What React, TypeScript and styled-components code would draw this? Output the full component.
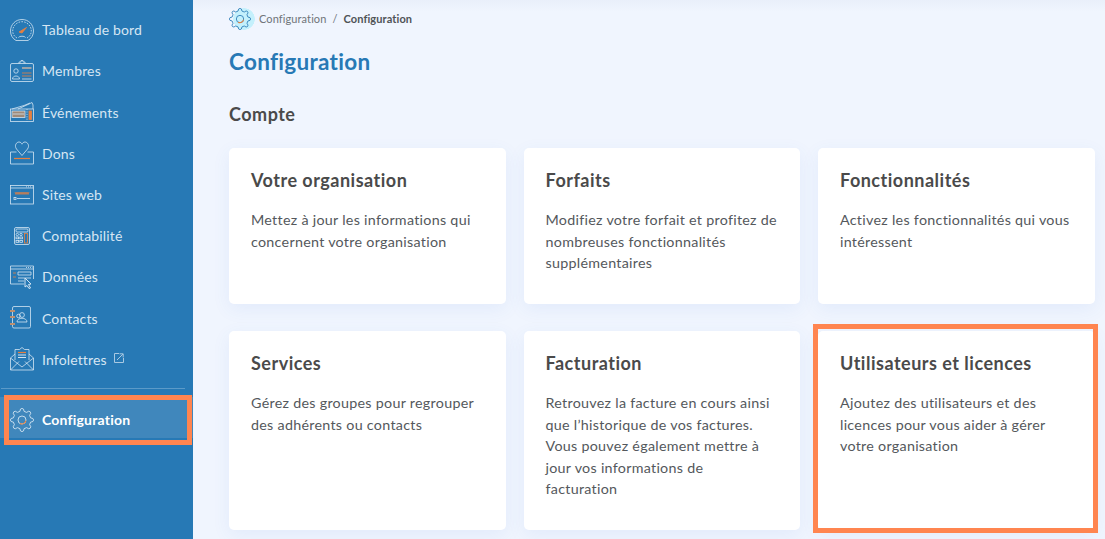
import React from 'react'
import styled, { createGlobalStyle } from 'styled-components'

const Global = createGlobalStyle`
  html, body { margin: 0; padding: 0; height: 539px; overflow: hidden; background: #f0f5fe; }
  * { box-sizing: border-box; }
  body { font-family: "Lato", "Open Sans", sans-serif; font-variant-ligatures: none; }
`

const line = '#d3e4f2'
const accent = '#e8803f'

const IconSvg = ({ children }: { children: React.ReactNode }) => (
  <svg width="24" height="24" viewBox="0 0 24 24" fill="none" stroke={line} strokeWidth="0.8">
    {children}
  </svg>
)

const GaugeIcon = () => (
  <IconSvg>
    <path d="M6 22.5 C2.5 20.5 .5 17 .5 13 C.5 6.5 5.5 1.5 12 1.5 C18.5 1.5 23.5 6.5 23.5 13 C23.5 17 21.5 20.5 18 22.5 Z" />
    <path d="M7 20 C4.3 18.5 2.7 16 2.7 13 C2.7 7.9 6.9 3.7 12 3.7 C17.1 3.7 21.3 7.9 21.3 13 C21.3 16 19.7 18.5 17 20" strokeDasharray="1.6 1.2" />
    <path d="M8.5 19.5 C9 17.8 15 17.8 15.5 19.5" />
    <path d="M9 14 L16.5 9.5 L12 15 Z" fill={accent} stroke={accent} />
  </IconSvg>
)

const BadgeIcon = () => (
  <IconSvg>
    <rect x="0.5" y="4.5" width="23" height="18" rx="1.5" />
    <path d="M9 4.5 V3 H11 V1.5 H13 V3 H15 V4.5" />
    <circle cx="6" cy="12" r="2.2" />
    <path d="M2.5 20 C2.5 16 9.5 16 9.5 20 Z" />
    <path d="M12 9 H21.5" stroke="#a9a8a8" strokeWidth="1.8" />
    <path d="M12 14 H21.5 M12 17 H21.5" stroke={accent} />
    <path d="M12 20 H21.5" />
  </IconSvg>
)

const TicketIcon = () => (
  <IconSvg>
    <path d="M2 9 L14 5.5 L20 3" />
    <path d="M8 9 L19 4 L22 2.5 L23 5 V9" />
    <rect x="0.5" y="9" width="23" height="12.5" />
    <rect x="2" y="11" width="13" height="6.5" fill="#a08a78" stroke={line} />
    <path d="M3 14 H14" stroke={line} />
    <rect x="19" y="11" width="2.5" height="8.5" fill={accent} stroke={accent} />
    <path d="M17 9 V21.5" strokeDasharray="1.2 1.2" />
  </IconSvg>
)

const HeartIcon = () => (
  <IconSvg>
    <path d="M12 14.5 L6.5 8 C4 4.5 6.5 1 9 1 C10.5 1 11.5 2 12 3.2 C12.5 2 13.5 1 15 1 C17.5 1 20 4.5 17.5 8 Z" />
    <path d="M6.5 11 H.5 V23 H23.5 V11 H17.5" />
    <path d="M4 17.5 H20" stroke={accent} strokeWidth="1.2" />
  </IconSvg>
)

const BrowserIcon = () => (
  <IconSvg>
    <rect x="0.5" y="2.5" width="23" height="18.5" />
    <path d="M.5 5 H23.5" />
    <path d="M16 3.8 H22.5" strokeDasharray="1 1" />
    <path d="M5 9 L6 11.5 L7 9 L8 11.5 L9 9 L10 11.5 L11 9 L12 11.5 L13 9 L14 11.5 L15 9 L16 11.5 L17 9 L18 11.5 L19 9" stroke={accent} />
    <path d="M7 15.5 H20" />
    <rect x="4" y="14.5" width="2" height="2" />
  </IconSvg>
)

const CalculatorIcon = () => (
  <IconSvg>
    <rect x="4.5" y="3.5" width="15" height="17" rx="1.5" />
    <rect x="6" y="5" width="12" height="3" rx="1" />
    <circle cx="7.3" cy="10.5" r="1.2" />
    <circle cx="11" cy="10.5" r="1.2" />
    <rect x="6" y="13" width="2.6" height="1.8" />
    <rect x="6" y="16.5" width="2.6" height="1.8" />
    <rect x="9.8" y="13" width="2.6" height="1.8" />
    <rect x="9.8" y="16.5" width="2.6" height="1.8" />
    <rect x="14.5" y="9.5" width="3" height="9.5" stroke={accent} />
  </IconSvg>
)

const DataIcon = () => (
  <IconSvg>
    <path d="M14 19 H.5 V1 H23.5 V14" />
    <path d="M.5 4 H23.5" />
    <path d="M16 2.5 H22.5" strokeDasharray="1 1" />
    <path d="M3 8 H6 M3 12 H6" stroke={accent} />
    <path d="M8 7 H21 V10 H8 Z M8 13 H21 M8 16 H14" />
    <path d="M15 13 L21 19 L18.5 19.5 L20.5 23 L19 23.5 L17 20.5 L15 22 Z" strokeWidth="1" />
  </IconSvg>
)

const ContactsIcon = () => (
  <IconSvg>
    <rect x="2.5" y="0.5" width="18" height="21.5" rx="1.5" />
    <circle cx="12" cy="9" r="2.4" />
    <circle cx="8.5" cy="10" r="1.8" />
    <path d="M7 16 C7 11 17 11 17 16 Z" />
    <path d="M0 5 H5 M0 11 H5 M0 18 H5" stroke="#bc8f70" strokeWidth="2" />
  </IconSvg>
)

const MailIcon = () => (
  <IconSvg>
    <path d="M.5 11 L12 20 L23.5 11 V23 H.5 Z" />
    <path d="M.5 23 L9 14.5 M23.5 23 L15 14.5" />
    <path d="M.5 11 L5 7 M23.5 11 L19 7" />
    <path d="M5 13 V2.5 H9.5 L12 .5 L14.5 2.5 H19 V13" />
    <path d="M8 5.5 H16" stroke={accent} strokeWidth="1.2" />
    <path d="M8 8 H16 M8 10.5 H16" strokeWidth="1.2" />
  </IconSvg>
)

// eight rounded teeth round the centre of a 24 box
const gearPath = (() => {
  const pts: string[] = []
  for (let i = 0; i < 8; i++) {
    const a = (i * Math.PI) / 4 - Math.PI / 2
    const at = (r: number, d: number) =>
      `${(12 + r * Math.cos(a + d)).toFixed(2)} ${(12 + r * Math.sin(a + d)).toFixed(2)}`
    pts.push(`${i === 0 ? 'M' : 'L'}${at(8.9, -0.24)} Q${at(11.9, -0.16)} ${at(11.6, 0)} Q${at(11.9, 0.16)} ${at(8.9, 0.24)}`)
  }
  return pts.join(' ') + ' Z'
})()

const GearIcon = ({ color = line, ring = line, size = 24 }: { color?: string; ring?: string; size?: number }) => (
  <svg width={size} height={size} viewBox="0 0 24 24" fill="none" stroke={color} strokeWidth="0.9" strokeLinejoin="round">
    <path d={gearPath} />
    <circle cx="12" cy="12" r="4" stroke={ring} />
    <path d="M15.9 12.7 A4 4 0 0 1 10 15.5" stroke={accent} strokeWidth="1.1" />
  </svg>
)

const ExternalIcon = () => (
  <svg width="10" height="10" viewBox="0 0 10 10" fill="none" stroke="#a9c9e2" strokeWidth="1">
    <path d="M5 .5 H.5 V9.5 H9.5 V5" />
    <path d="M3 7 L9 1 M5.5 .8 H9.2 V4.5" />
  </svg>
)

const Page = styled.div`
  display: flex;
  height: 539px;
  overflow: hidden;
  position: relative;
`

const Sidebar = styled.nav`
  width: 193px;
  flex-shrink: 0;
  background: #2779b5;
  padding-top: 9.2px;
  position: relative;
`

const NavItem = styled.div<{ $active?: boolean }>`
  display: flex;
  align-items: center;
  height: 41.2px;
  padding-left: 10px;
  padding-top: ${p => (p.$active ? '5px' : '0')};
  gap: 8px;
  font-size: 14px;
  letter-spacing: ${p => (p.$active ? '0.2px' : '0.15px')};
  color: ${p => (p.$active ? '#ffffff' : '#d6e6f3')};
  font-weight: ${p => (p.$active ? 700 : 400)};
  background: ${p => (p.$active ? '#4087bc' : 'transparent')};
`

const Divider = styled.div`
  height: 1px;
  margin: 8px 8px 8px 1px;
  background: #5b9ac8;
`

const ExternalMark = styled.span`
  display: inline-flex;
  margin-left: -1px;
  margin-top: -3px;
`

const Highlight = styled.div`
  position: absolute;
  border: 5px solid #ff8550;
  pointer-events: none;
`

const NavHighlight = styled(Highlight)`
  left: 4px;
  top: 395px;
  width: 188px;
  height: 50px;
`

const CardHighlight = styled(Highlight)`
  left: 813px;
  top: 324px;
  width: 285px;
  height: 209px;
`

const Main = styled.main`
  flex: 1;
  padding: 6px 11px 0 36px;
  color: #4a4a4a;
  background: linear-gradient(#e9effa, #f0f5fe 12px);
`

const Crumbs = styled.div`
  display: flex;
  align-items: center;
  height: 26px;
  font-size: 11px;
  letter-spacing: 0.1px;
  color: #6f7479;
`

const CrumbIcon = styled.span`
  display: flex;
  align-items: center;
  width: 26px;
  height: 26px;
  margin-right: 4px;
  background: radial-gradient(circle at 15px 13px, #c4f0fc 0 10.5px, transparent 11px);
`

const CrumbLabel = styled.span`
  display: flex;
  margin-top: -2px;
`

const CrumbSep = styled.span`
  margin: 0 6px;
`

const CrumbCurrent = styled.span`
  font-weight: 700;
  color: #4f5357;
`

const Title = styled.h1`
  margin: 13px 0 0;
  font-size: 22.5px;
  line-height: 34px;
  font-weight: 700;
  letter-spacing: 0.3px;
  color: #2779b5;
`

const Section = styled.h2`
  margin: 23px 0 0;
  font-size: 18px;
  line-height: 24px;
  font-weight: 700;
  letter-spacing: 0.5px;
  color: #4a4a4a;
`

const Grid = styled.div`
  display: grid;
  grid-template-columns: repeat(3, 276.5px);
  grid-template-rows: 156px 199px;
  column-gap: 18px;
  row-gap: 27px;
  margin-top: 22px;
`

const Card = styled.div`
  background: #ffffff;
  border-radius: 5px;
  padding: 20px 22px;
  box-shadow: 0 5px 18px rgba(60, 110, 220, 0.08);
`

const CardTitle = styled.h3`
  margin: 0 0 17px;
  font-size: 18px;
  line-height: 24px;
  font-weight: 700;
  letter-spacing: 0.5px;
  color: #4a4a4a;
`

const CardText = styled.p`
  margin: 0;
  font-size: 14.3px;
  line-height: 21.6px;
  letter-spacing: 0.28px;
  color: #54585c;
`

const navItems: { label: string; icon: React.ReactNode; external?: boolean }[] = [
  { label: 'Tableau de bord', icon: <GaugeIcon /> },
  { label: 'Membres', icon: <BadgeIcon /> },
  { label: 'Événements', icon: <TicketIcon /> },
  { label: 'Dons', icon: <HeartIcon /> },
  { label: 'Sites web', icon: <BrowserIcon /> },
  { label: 'Comptabilité', icon: <CalculatorIcon /> },
  { label: 'Données', icon: <DataIcon /> },
  { label: 'Contacts', icon: <ContactsIcon /> },
  { label: 'Infolettres', icon: <MailIcon />, external: true },
]

const cards = [
  { title: 'Votre organisation', text: 'Mettez à jour les informations qui concernent votre organisation' },
  { title: 'Forfaits', text: 'Modifiez votre forfait et profitez de nombreuses fonctionnalités supplémentaires' },
  { title: 'Fonctionnalités', text: 'Activez les fonctionnalités qui vous intéressent' },
  { title: 'Services', text: 'Gérez des groupes pour regrouper des adhérents ou contacts' },
  {
    title: 'Facturation',
    text: 'Retrouvez la facture en cours ainsi que l’historique de vos factures. Vous pouvez également mettre à jour vos informations de facturation',
  },
  { title: 'Utilisateurs et licences', text: 'Ajoutez des utilisateurs et des licences pour vous aider à gérer votre organisation' },
]

export default function App() {
  return (
    <Page>
      <Global />
      <Sidebar>
        {navItems.map(item => (
          <NavItem key={item.label}>
            {item.icon}
            {item.label}
            {item.external && (
              <ExternalMark>
                <ExternalIcon />
              </ExternalMark>
            )}
          </NavItem>
        ))}
        <Divider />
        <NavItem $active>
          <GearIcon />
          Configuration
        </NavItem>
      </Sidebar>
      <Main>
        <Crumbs>
          <CrumbIcon>
            <GearIcon color="#2779b5" ring="#2779b5" size={22} />
          </CrumbIcon>
          <CrumbLabel>
            Configuration
            <CrumbSep>/</CrumbSep>
            <CrumbCurrent>Configuration</CrumbCurrent>
          </CrumbLabel>
        </Crumbs>
        <Title>Configuration</Title>
        <Section>Compte</Section>
        <Grid>
          {cards.map(c => (
            <Card key={c.title}>
              <CardTitle>{c.title}</CardTitle>
              <CardText>{c.text}</CardText>
            </Card>
          ))}
        </Grid>
      </Main>
      <NavHighlight />
      <CardHighlight />
    </Page>
  )
}
